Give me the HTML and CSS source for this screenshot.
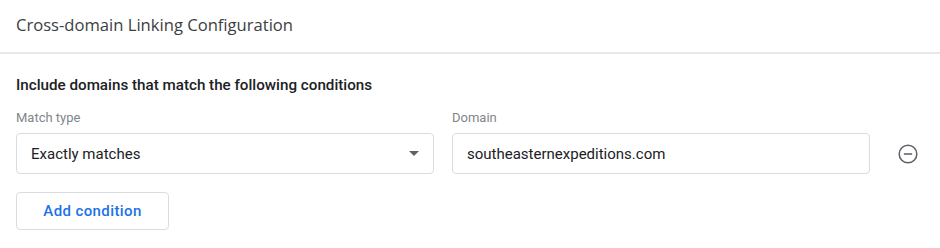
FILE: index.html
```html
<!DOCTYPE html>
<html lang="en">
<head>
  <meta charset="UTF-8">
  <title>Cross-domain Linking Configuration</title>
  <link rel="stylesheet" href="styles.css">
</head>
<body>
  <div class="header">Cross-domain Linking Configuration</div>

  <div class="content">
    <h2 class="section-title">Include domains that match the following conditions</h2>

    <div class="condition">
      <div class="field">
        <label class="field-label">Match type</label>
        <div class="box select">
          <span>Exactly matches</span>
          <span class="arrow"></span>
        </div>
      </div>
      <div class="field">
        <label class="field-label">Domain</label>
        <div class="box">southeasternexpeditions.com</div>
      </div>
      <button class="remove" title="Remove">
        <svg width="22" height="22" viewBox="0 0 24 24">
          <circle cx="12" cy="12" r="9.6" fill="none" stroke="#5f6368" stroke-width="1.7"/>
          <line x1="7.5" y1="12" x2="16.5" y2="12" stroke="#5f6368" stroke-width="1.7"/>
        </svg>
      </button>
    </div>

    <button class="add">Add condition</button>
  </div>
</body>
</html>
```

FILE: styles.css
```css
body {
  margin: 0;
  background: #fff;
  font-family: Roboto, "Noto Sans", sans-serif;
  color: #202124;
}

.header {
  height: 52px;
  line-height: 50px;
  padding-left: 16px;
  font-family: "Open Sans", Roboto, sans-serif;
  font-size: 16.6px;
  color: #3c4043;
  border-bottom: 2px solid #e8e8e8;
}

.content {
  padding: 21px 16px 0;
}

.section-title {
  margin: 0 0 15px;
  font-size: 15.2px;
  font-weight: 500;
  line-height: 20px;
}

.condition {
  display: flex;
  align-items: flex-end;
  gap: 18px;
}

.field {
  width: 418px;
}

.field-label {
  display: block;
  font-size: 13px;
  line-height: 16px;
  color: #80868b;
  margin-bottom: 7px;
}

.box {
  box-sizing: border-box;
  height: 41px;
  border: 1px solid #dadce0;
  border-radius: 4px;
  padding: 0 14px;
  display: flex;
  align-items: center;
  font-size: 15px;
}

.select {
  justify-content: space-between;
}

.arrow {
  width: 0;
  height: 0;
  border-left: 5px solid transparent;
  border-right: 5px solid transparent;
  border-top: 5px solid #5f6368;
}

.remove {
  background: none;
  border: none;
  padding: 0;
  margin: 0 0 7px 7px;
  width: 26px;
  height: 26px;
  display: flex;
  align-items: center;
  justify-content: center;
}

.add {
  margin-top: 18px;
  width: 153px;
  height: 38px;
  background: #fff;
  border: 1px solid #dadce0;
  border-radius: 4px;
  font-family: Roboto, sans-serif;
  font-size: 15px;
  font-weight: 500;
  letter-spacing: 0.4px;
  color: #1a73e8;
}
```
